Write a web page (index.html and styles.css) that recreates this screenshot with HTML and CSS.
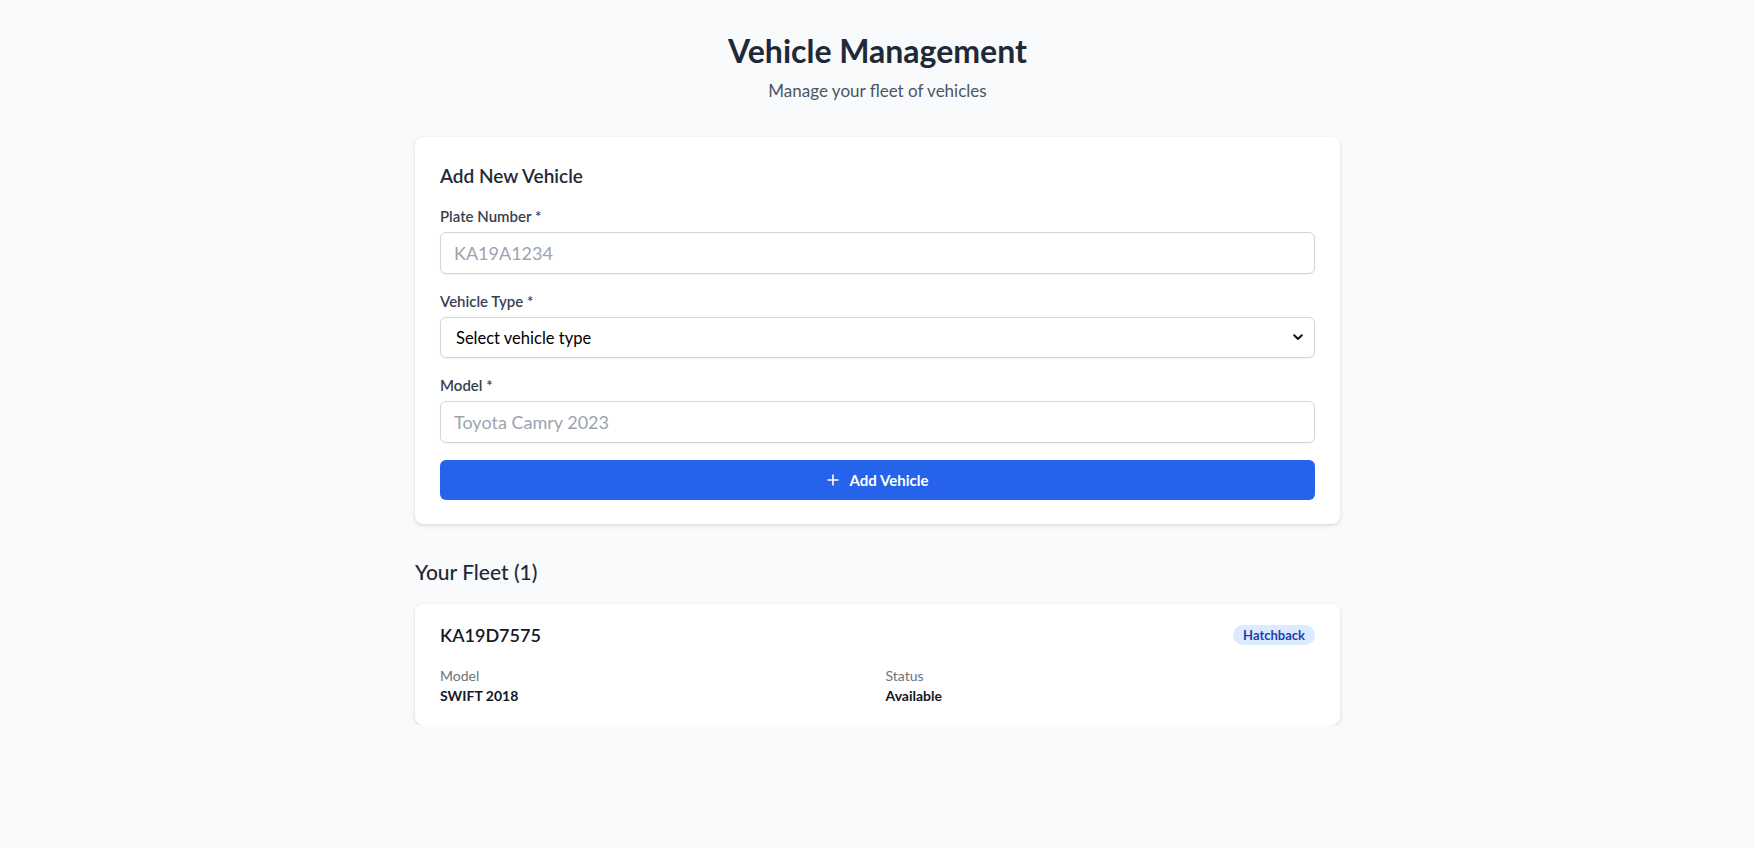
FILE: index.html
```html
<!DOCTYPE html>
<html lang="en">
<head>
<meta charset="utf-8">
<title>Vehicle Management</title>
<link rel="stylesheet" href="styles.css">
</head>
<body>
<main class="page">
  <header class="header">
    <h1 class="title">Vehicle Management</h1>
    <p class="subtitle">Manage your fleet of vehicles</p>
  </header>

  <section class="card form-card">
    <h2 class="card-title">Add New Vehicle</h2>
    <form class="form">
      <div class="field">
        <label class="label">Plate Number *</label>
        <input class="input" type="text" placeholder="KA19A1234">
      </div>
      <div class="field">
        <label class="label">Vehicle Type *</label>
        <div class="select-wrap">
          <select class="input select">
            <option>Select vehicle type</option>
          </select>
          <svg class="chevron" width="10" height="7" viewBox="0 0 10 7"><path d="M1.2 1.2 5 5 8.8 1.2" fill="none" stroke="#111" stroke-width="2" stroke-linecap="round" stroke-linejoin="round"/></svg>
        </div>
      </div>
      <div class="field">
        <label class="label">Model *</label>
        <input class="input" type="text" placeholder="Toyota Camry 2023">
      </div>
      <button class="btn" type="button">
        <svg class="plus" width="12" height="12" viewBox="0 0 12 12"><path d="M6 1v10M1 6h10" stroke="#fff" stroke-width="1.6" stroke-linecap="round"/></svg>
        <span>Add Vehicle</span>
      </button>
    </form>
  </section>

  <section class="fleet">
    <h2 class="fleet-title">Your Fleet (1)</h2>
    <article class="card vehicle">
      <div class="vehicle-top">
        <span class="plate">KA19D7575</span>
        <span class="badge">Hatchback</span>
      </div>
      <div class="vehicle-info">
        <div>
          <div class="info-label">Model</div>
          <div class="info-value">SWIFT 2018</div>
        </div>
        <div>
          <div class="info-label">Status</div>
          <div class="info-value">Available</div>
        </div>
      </div>
    </article>
  </section>
</main>
</body>
</html>
```

FILE: styles.css
```css
* { box-sizing: border-box; }

html, body {
  margin: 0;
  padding: 0;
}

body {
  background: #f9fafb;
  font-family: "Lato", "Open Sans", "Liberation Sans", sans-serif;
  color: #1f2937;
}

.page {
  width: 925px;
  margin: 0 auto;
  padding-top: 32px;
}

.header {
  text-align: center;
}

.title {
  margin: 0;
  font-size: 32px;
  line-height: 38px;
  font-weight: 700;
  color: #1f2937;
}

.subtitle {
  margin: 9px 0 0;
  font-size: 17px;
  line-height: 24px;
  color: #4b5563;
}

.card {
  background: #fff;
  border-radius: 8px;
  box-shadow: 0 1px 3px rgba(0,0,0,0.10), 0 2px 6px rgba(0,0,0,0.06);
}

.form-card {
  margin-top: 34px;
  padding: 25px 25px 24px;
}

.card-title {
  margin: 0;
  font-size: 19px;
  line-height: 28px;
  font-weight: 600;
  color: #1f2937;
}

.form {
  margin-top: 16px;
  display: flex;
  flex-direction: column;
  gap: 17px;
}

.field {
  display: flex;
  flex-direction: column;
}

.label {
  font-size: 15px;
  line-height: 20px;
  font-weight: 600;
  color: #374151;
  margin-bottom: 6px;
}

.input {
  width: 100%;
  height: 42px;
  border: 1px solid #d1d5db;
  border-radius: 6px;
  padding: 0 13px;
  font-family: inherit;
  font-size: 18px;
  color: #111827;
  background: #fff;
  box-shadow: 0 1px 2px rgba(0,0,0,0.04);
  outline: none;
}

.input::placeholder {
  color: #9ca3af;
}

.select-wrap {
  position: relative;
}

.select {
  appearance: none;
  -webkit-appearance: none;
  height: 41px;
  padding-left: 15px;
  font-size: 16.5px;
  color: #000;
}

.chevron {
  position: absolute;
  right: 12px;
  top: 17px;
  pointer-events: none;
}

.btn {
  height: 40px;
  border: none;
  border-radius: 6px;
  background: #2563eb;
  color: #fff;
  font-family: inherit;
  font-size: 15px;
  font-weight: 700;
  display: flex;
  align-items: center;
  justify-content: center;
  gap: 11px;
  cursor: pointer;
}

.fleet {
  margin-top: 34px;
}

.fleet-title {
  margin: 0;
  font-size: 21px;
  line-height: 28px;
  font-weight: 500;
  color: #1f2937;
}

.vehicle {
  margin-top: 18px;
  padding: 17px 25px 19px;
}

.vehicle-top {
  display: flex;
  align-items: center;
  justify-content: space-between;
  height: 28px;
}

.plate {
  font-size: 18px;
  font-weight: 600;
  color: #111827;
}

.badge {
  background: #dbeafe;
  color: #1e40af;
  font-size: 13px;
  font-weight: 700;
  line-height: 20px;
  padding: 0 10px;
  border-radius: 999px;
}

.vehicle-info {
  margin-top: 17px;
  display: grid;
  grid-template-columns: 1fr 1fr;
  column-gap: 16px;
}

.info-label {
  font-size: 14px;
  line-height: 20px;
  color: #6b7280;
}

.info-value {
  font-size: 14px;
  line-height: 20px;
  font-weight: 700;
  color: #111827;
}
```
